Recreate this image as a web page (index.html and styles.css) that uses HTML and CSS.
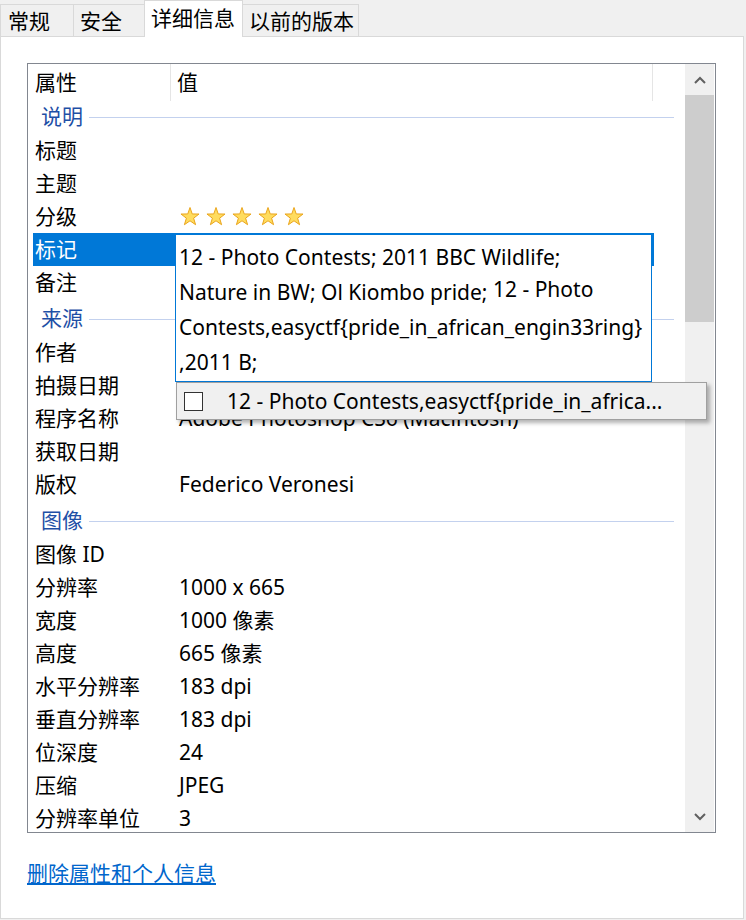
FILE: index.html
```html
<!DOCTYPE html>
<html lang="zh-CN">
<head>
    <meta charset="UTF-8">
    <title>属性 - 详细信息</title>
    <link rel="stylesheet" href="styles.css">
</head>
<body>

    <div class="tabs">
        <div class="tab">常规</div>
        <div class="tab">安全</div>
        <div class="tab tab-active">详细信息</div>
        <div class="tab">以前的版本</div>
    </div>

    <div class="panel">
        <div class="list">
            <div class="list-body">
                <div class="list-head">
                    <div class="head-name">属性</div>
                    <div class="head-value">值</div>
                </div>

                <div class="group">说明</div>
                <div class="row"><div class="name">标题</div><div class="value"></div></div>
                <div class="row"><div class="name">主题</div><div class="value"></div></div>
                <div class="row">
                    <div class="name">分级</div>
                    <div class="value">
                        <svg class="stars" width="130" height="20" viewBox="0 0 130 20">
                            <defs>
                                <polygon id="star" points="10,0.5 12.23,6.93 19.03,7.06 13.61,11.17 15.59,17.69 10,13.8 4.41,17.69 6.39,11.17 0.97,7.06 7.77,6.93" fill="#ffdc5e" stroke="#eaa51c" stroke-width="1" stroke-linejoin="round"/>
                            </defs>
                            <use href="#star" x="1"/>
                            <use href="#star" x="27"/>
                            <use href="#star" x="53"/>
                            <use href="#star" x="79"/>
                            <use href="#star" x="105"/>
                        </svg>
                    </div>
                </div>
                <div class="row row-selected"><div class="name">标记</div><div class="value"></div></div>
                <div class="row"><div class="name">备注</div><div class="value"></div></div>

                <div class="group">来源</div>
                <div class="row"><div class="name">作者</div><div class="value"></div></div>
                <div class="row"><div class="name">拍摄日期</div><div class="value"></div></div>
                <div class="row"><div class="name">程序名称</div><div class="value">Adobe Photoshop CS6 (Macintosh)</div></div>
                <div class="row"><div class="name">获取日期</div><div class="value"></div></div>
                <div class="row"><div class="name">版权</div><div class="value">Federico Veronesi</div></div>

                <div class="group">图像</div>
                <div class="row"><div class="name">图像 ID</div><div class="value"></div></div>
                <div class="row"><div class="name">分辨率</div><div class="value">1000 x 665</div></div>
                <div class="row"><div class="name">宽度</div><div class="value">1000 像素</div></div>
                <div class="row"><div class="name">高度</div><div class="value">665 像素</div></div>
                <div class="row"><div class="name">水平分辨率</div><div class="value">183 dpi</div></div>
                <div class="row"><div class="name">垂直分辨率</div><div class="value">183 dpi</div></div>
                <div class="row"><div class="name">位深度</div><div class="value">24</div></div>
                <div class="row"><div class="name">压缩</div><div class="value">JPEG</div></div>
                <div class="row"><div class="name">分辨率单位</div><div class="value">3</div></div>
            </div>

            <div class="scrollbar">
                <div class="scroll-btn">
                    <svg width="12" height="8" viewBox="0 0 12 8"><polyline points="1,7 6,2 11,7" fill="none" stroke="#606060" stroke-width="2"/></svg>
                </div>
                <div class="scroll-thumb"></div>
                <div class="scroll-track"></div>
                <div class="scroll-btn">
                    <svg width="12" height="8" viewBox="0 0 12 8"><polyline points="1,1 6,6 11,1" fill="none" stroke="#606060" stroke-width="2"/></svg>
                </div>
            </div>

            <!-- éditeur du champ "标记" ouvert par-dessus la liste -->
            <div class="tag-editor">
                12 - Photo Contests; 2011 BBC Wildlife;<br>
                Nature in BW; Ol Kiombo pride; <span class="lift">12 - Photo</span><br>
                Contests,easyctf{pride_in_african_engin33ring}<br>
                ,2011 B;
            </div>
            <div class="tag-suggest">
                <span class="check"></span>
                <span>12 - Photo Contests,easyctf{pride_in_africa...</span>
            </div>
        </div>

        <div class="link-line">
            <a href="#" class="remove-link">删除属性和个人信息</a>
        </div>
    </div>

</body>
</html>
```

FILE: styles.css
```css
body {
    margin: 0;
    background: #f0f0f0;
    font-family: "Noto Sans", "Noto Sans CJK SC", sans-serif;
    font-size: 21px;
    color: #000;
}

.tabs {
    display: flex;
    align-items: flex-end;
    height: 36px;
}

.tab {
    box-sizing: border-box;
    height: 32px;
    min-width: 72px;
    padding: 2px 4px 0 6px;
    line-height: 28px;
    border: 1px solid #d9d9d9;
    border-bottom: none;
    margin-right: -1px;
    white-space: nowrap;
}

    .tab:first-child {
        min-width: 74px;
        padding-left: 7px;
    }

.tab-active {
    position: relative;
    z-index: 1;
    height: 37px;
    margin-bottom: -1px;
    padding: 0 7px 0 6px;
    line-height: 34px;
    background: #fff;
}

.panel {
    box-sizing: border-box;
    width: 744px;
    height: 883px;
    background: #fff;
    border: 1px solid #d9d9d9;
    padding: 26px 0 0 26px;
}

.list {
    position: relative;
    box-sizing: border-box;
    width: 689px;
    height: 770px;
    border: 1px solid #828790;
    display: flex;
    background: #fff;
}

.list-body {
    flex: 1;
    overflow: hidden;
}

.list-head {
    display: flex;
    height: 37px;
    line-height: 37px;
}

.head-name {
    width: 143px;
    padding-left: 7px;
    box-sizing: border-box;
    border-right: 1px solid #e5e5e5;
}

.head-value {
    width: 482px;
    padding-left: 6px;
    box-sizing: border-box;
    border-right: 1px solid #e5e5e5;
}

.group {
    display: flex;
    align-items: center;
    box-sizing: border-box;
    width: 641px;
    height: 33px;
    margin-left: 5px;
    padding: 0 0 5px 8px;
    color: #1e4fa6;
}

    .group::after {
        content: "";
        flex: 1;
        height: 1px;
        margin: 4px 0 0 6px;
        background: #c3d1ee;
    }

.row + .group {
    margin-top: 4px;
}

.row {
    display: flex;
    width: 621px;
    height: 33px;
    line-height: 33px;
    margin-left: 5px;
    white-space: nowrap;
}

    .row .name {
        width: 142px;
        padding-left: 2px;
        box-sizing: border-box;
    }

    .row .value {
        flex: 1;
        padding-left: 4px;
    }

.row-selected {
    background: #0078d7;
    color: #fff;
}

.stars {
    vertical-align: -3px;
}

.scrollbar {
    width: 29px;
    margin-right: 1px;
    background: #f0f0f0;
    display: flex;
    flex-direction: column;
}

.scroll-btn {
    height: 31px;
    display: flex;
    align-items: center;
    justify-content: center;
}

.scroll-thumb {
    height: 227px;
    background: #cdcdcd;
}

.scroll-track {
    flex: 1;
}

.tag-editor {
    position: absolute;
    left: 147px;
    top: 170px;
    box-sizing: border-box;
    width: 477px;
    height: 148px;
    padding: 5px 3px;
    border: 1px solid #0078d7;
    background: #fff;
    line-height: 35px;
    white-space: nowrap;
}

.lift {
    display: inline-block;
    transform: translateY(-3px);
}

.tag-suggest {
    position: absolute;
    left: 148px;
    top: 318px;
    box-sizing: border-box;
    width: 531px;
    height: 38px;
    padding-left: 7px;
    display: flex;
    align-items: center;
    background: #f0f0f0;
    border: 1px solid #a0a0a0;
    box-shadow: 3px 3px 4px rgba(0, 0, 0, 0.3);
    white-space: nowrap;
}

.check {
    box-sizing: border-box;
    width: 19px;
    height: 19px;
    margin-right: 24px;
    border: 1px solid #333;
    background: #fff;
}

.link-line {
    margin-top: 27px;
    line-height: 27px;
}

.remove-link {
    color: #0066cc;
    text-decoration: underline;
}
```
